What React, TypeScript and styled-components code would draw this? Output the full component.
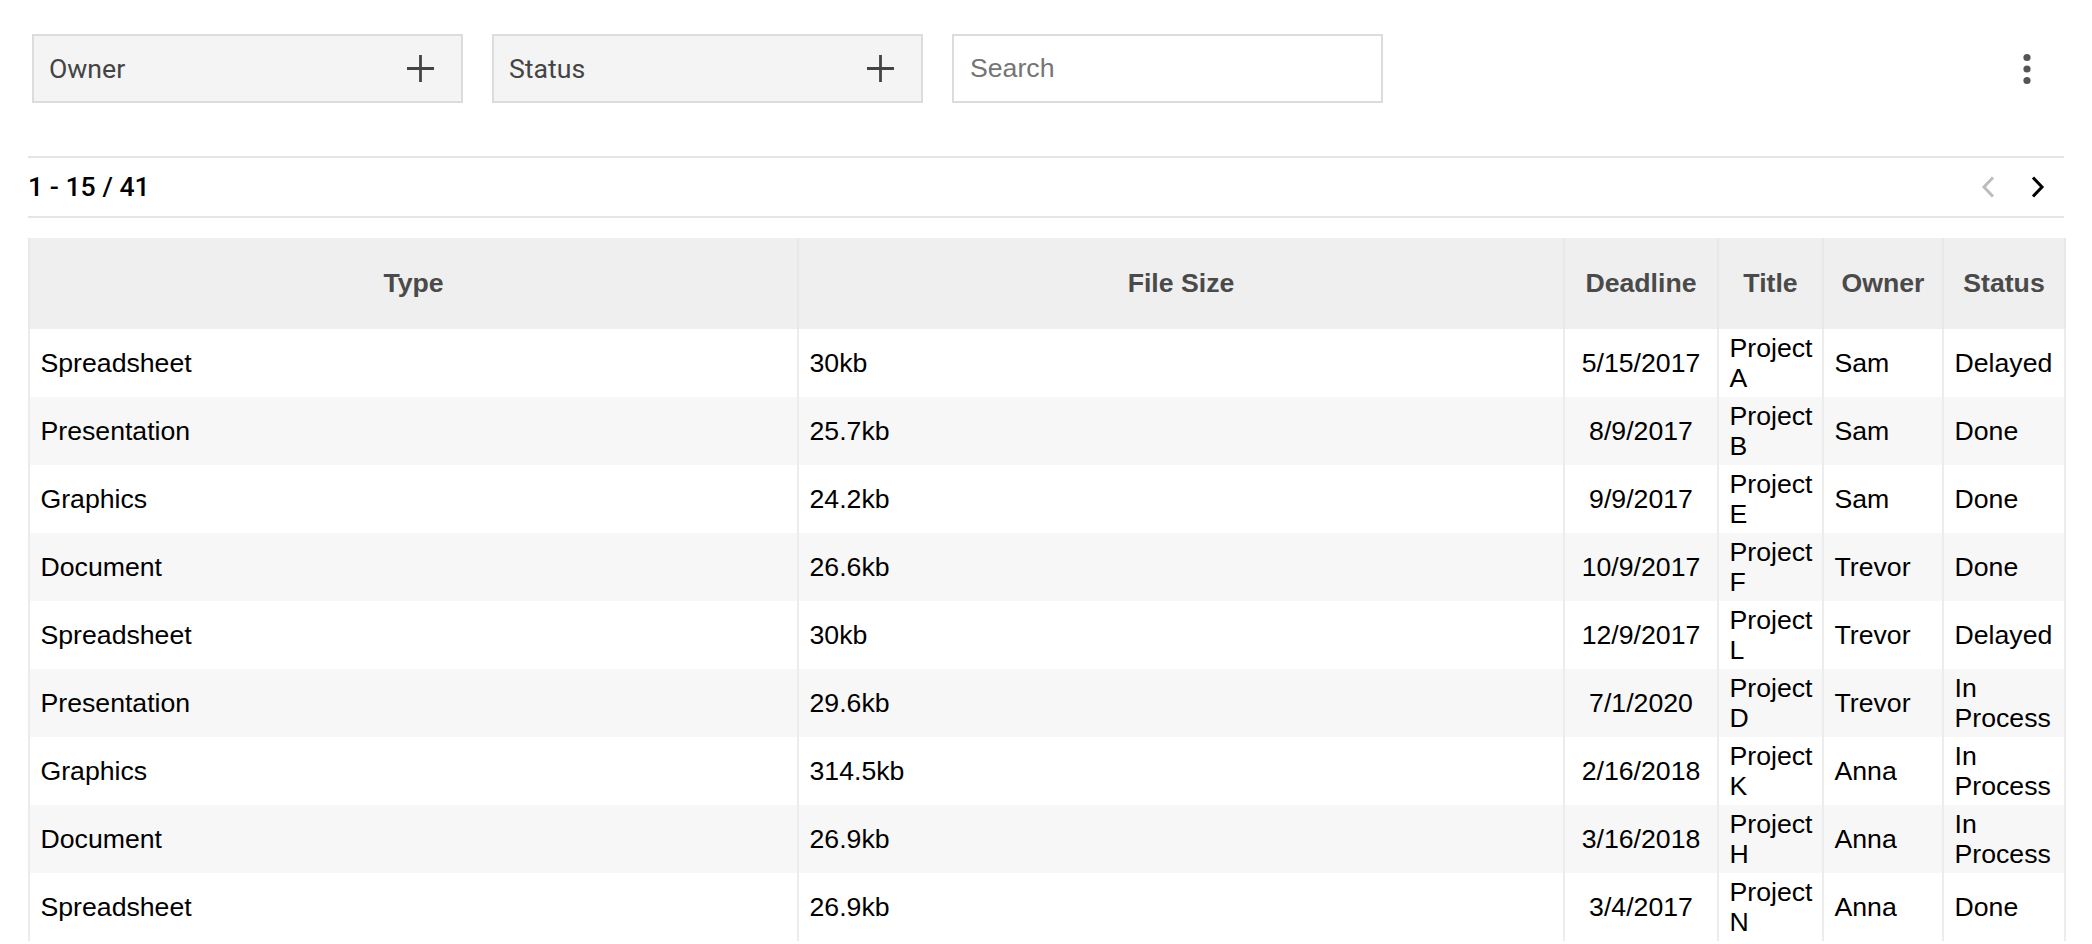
import { FC } from 'react'
import styled, { createGlobalStyle } from 'styled-components'

const GlobalStyle = createGlobalStyle`
  html, body {
    margin: 0;
    padding: 0;
    background: #ffffff;
  }
  * {
    box-sizing: border-box;
  }
`

const Page = styled.div`
  padding: 34px 28px 0 28px;
  font-family: "Liberation Sans", Arial, sans-serif;
  color: #000;
`

const Toolbar = styled.div`
  display: flex;
  align-items: center;
  gap: 29px;
  padding: 0 17px 0 4px;
  height: 69px;
`

const FilterButton = styled.div`
  width: 431px;
  height: 69px;
  display: flex;
  align-items: center;
  justify-content: space-between;
  padding: 0 26px 0 15px;
  background: #f4f4f4;
  border: 2px solid #dcdcdc;
  font-family: Roboto, "Noto Sans", sans-serif;
  font-size: 26.67px;
  color: #444;
`

const SearchInput = styled.input`
  width: 431px;
  height: 69px;
  padding: 0 16px;
  border: 2px solid #dcdcdc;
  background: #fff;
  font-family: "Liberation Sans", Arial, sans-serif;
  font-size: 26.67px;
  color: #222;
  outline: none;

  &::placeholder {
    color: #757575;
  }
`

const MoreButton = styled.div`
  margin-left: auto;
  width: 40px;
  height: 40px;
  display: flex;
  align-items: center;
  justify-content: center;
`

const PagerBar = styled.div`
  margin-top: 53px;
  height: 62px;
  display: flex;
  align-items: center;
  justify-content: space-between;
  border-top: 2px solid #e5e5e5;
  border-bottom: 2px solid #e5e5e5;
  padding-right: 18px;
`

const PagerText = styled.span`
  font-family: Roboto, "Noto Sans", sans-serif;
  font-weight: 500;
  font-size: 26.67px;
  color: #000;
`

const PagerArrows = styled.div`
  display: flex;
  align-items: center;
  gap: 34px;
`

const Table = styled.table`
  margin-top: 20px;
  width: 2036px;
  table-layout: fixed;
  border-collapse: collapse;
  font-size: 26.67px;
`

const HeadCell = styled.th`
  height: 91px;
  padding: 0 10px;
  background: #efefef;
  border-left: 2px solid #e8e8e8;
  border-right: 2px solid #e8e8e8;
  color: #4a4a4a;
  font-weight: 700;
  text-align: center;
  vertical-align: middle;
`

const Row = styled.tr<{ $striped: boolean }>`
  background: ${p => (p.$striped ? '#f7f7f7' : '#ffffff')};
`

const Cell = styled.td<{ $align?: 'left' | 'center' }>`
  height: 68px;
  padding: 3px 10.5px;
  line-height: 30px;
  border-left: 2px solid #ececec;
  border-right: 2px solid #ececec;
  text-align: ${p => p.$align ?? 'left'};
  vertical-align: middle;
  color: #000;
  overflow-wrap: normal;
`

const PlusIcon: FC = () => (
  <svg width="29" height="29" viewBox="0 0 29 29">
    <path d="M14.5 1 V28 M1 14.5 H28" stroke="#444" strokeWidth="2.8" fill="none" />
  </svg>
)

const MoreIcon: FC = () => (
  <svg width="40" height="40" viewBox="0 0 40 40">
    <circle cx="20" cy="8.5" r="3.6" fill="#555" />
    <circle cx="20" cy="20" r="3.6" fill="#555" />
    <circle cx="20" cy="31.5" r="3.6" fill="#555" />
  </svg>
)

const Chevron: FC<{ dir: 'left' | 'right'; color: string }> = ({ dir, color }) => (
  <svg width="16" height="24" viewBox="0 0 16 24">
    <path
      d={dir === 'left' ? 'M13 2.5 L4 12 L13 21.5' : 'M3 2.5 L12 12 L3 21.5'}
      stroke={color}
      strokeWidth="3"
      fill="none"
    />
  </svg>
)

type Doc = {
  type: string
  size: string
  deadline: string
  title: string
  owner: string
  status: string
}

const docs: Doc[] = [
  { type: 'Spreadsheet', size: '30kb', deadline: '5/15/2017', title: 'Project A', owner: 'Sam', status: 'Delayed' },
  { type: 'Presentation', size: '25.7kb', deadline: '8/9/2017', title: 'Project B', owner: 'Sam', status: 'Done' },
  { type: 'Graphics', size: '24.2kb', deadline: '9/9/2017', title: 'Project E', owner: 'Sam', status: 'Done' },
  { type: 'Document', size: '26.6kb', deadline: '10/9/2017', title: 'Project F', owner: 'Trevor', status: 'Done' },
  { type: 'Spreadsheet', size: '30kb', deadline: '12/9/2017', title: 'Project L', owner: 'Trevor', status: 'Delayed' },
  { type: 'Presentation', size: '29.6kb', deadline: '7/1/2020', title: 'Project D', owner: 'Trevor', status: 'In Process' },
  { type: 'Graphics', size: '314.5kb', deadline: '2/16/2018', title: 'Project K', owner: 'Anna', status: 'In Process' },
  { type: 'Document', size: '26.9kb', deadline: '3/16/2018', title: 'Project H', owner: 'Anna', status: 'In Process' },
  { type: 'Spreadsheet', size: '26.9kb', deadline: '3/4/2017', title: 'Project N', owner: 'Anna', status: 'Done' },
]

const columns = [
  { label: 'Type', width: 769 },
  { label: 'File Size', width: 766 },
  { label: 'Deadline', width: 154 },
  { label: 'Title', width: 105 },
  { label: 'Owner', width: 120 },
  { label: 'Status', width: 122 },
]

const App: FC = () => {
  return (
    <Page>
      <GlobalStyle />
      <Toolbar>
        <FilterButton>
          Owner
          <PlusIcon />
        </FilterButton>
        <FilterButton>
          Status
          <PlusIcon />
        </FilterButton>
        <SearchInput placeholder="Search" />
        <MoreButton>
          <MoreIcon />
        </MoreButton>
      </Toolbar>

      <PagerBar>
        <PagerText>1 - 15 / 41</PagerText>
        <PagerArrows>
          <Chevron dir="left" color="#bdbdbd" />
          <Chevron dir="right" color="#000" />
        </PagerArrows>
      </PagerBar>

      <Table>
        <colgroup>
          {columns.map(col => (
            <col key={col.label} style={{ width: col.width }} />
          ))}
        </colgroup>
        <thead>
          <tr>
            {columns.map(col => (
              <HeadCell key={col.label}>{col.label}</HeadCell>
            ))}
          </tr>
        </thead>
        <tbody>
          {docs.map((doc, index) => (
            <Row key={index} $striped={index % 2 === 1}>
              <Cell>{doc.type}</Cell>
              <Cell>{doc.size}</Cell>
              <Cell $align="center">{doc.deadline}</Cell>
              <Cell>{doc.title}</Cell>
              <Cell>{doc.owner}</Cell>
              <Cell>{doc.status}</Cell>
            </Row>
          ))}
        </tbody>
      </Table>
    </Page>
  )
}

export default App
